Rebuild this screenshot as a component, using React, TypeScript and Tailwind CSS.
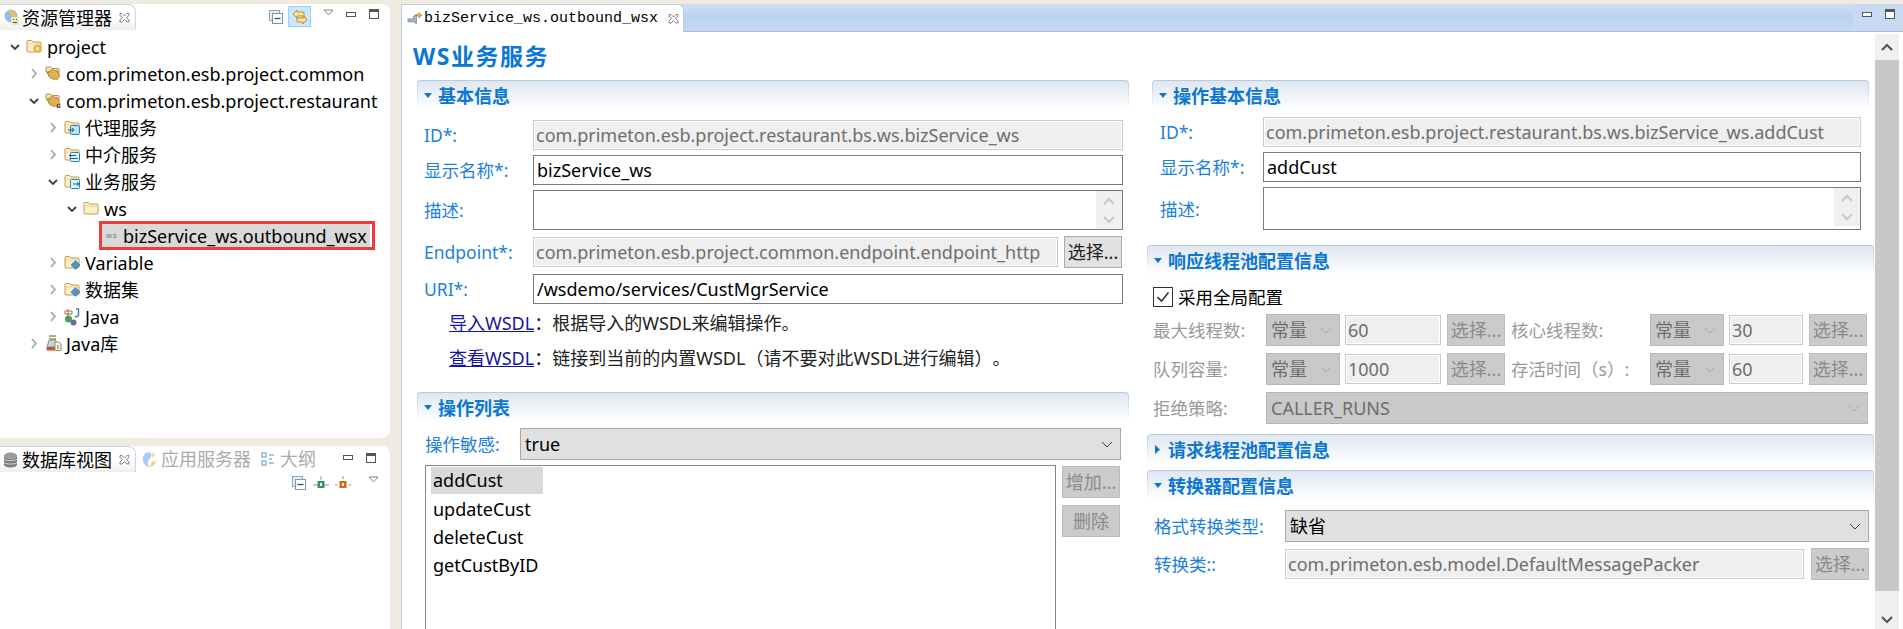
import React from "react";

const font = "font-['Noto_Sans','Noto_Sans_CJK_SC',sans-serif]";

function Chevron({ open, className = "" }: { open: boolean; className?: string }) {
  return open ? (
    <svg width="10" height="8" viewBox="0 0 10 8" className={className}><path d="M1 2l4 4 4-4" fill="none" stroke="#404040" strokeWidth="1.8" /></svg>
  ) : (
    <svg width="8" height="11" viewBox="0 0 8 11" className={className}><path d="M2 1l4 4.5L2 10" fill="none" stroke="#a8a8a8" strokeWidth="1.8" /></svg>
  );
}

function Folder({ badge }: { badge?: "gear" | "box1" | "box2" | "box3" | "diamond" }) {
  return (
    <svg width="17" height="17" viewBox="0 0 17 17">
      <path d="M1 3.500a1 1 0 011-1h3.500l1.500 1.500h7a1 1 0 011 1v8a1 1 0 01-1 1H2a1 1 0 01-1-1z" fill="#fbeecb" stroke="#c39a55" />
      <path d="M2 6h12.500" stroke="#f3d58f" />
      {badge === "gear" && <><circle cx="11.500" cy="10.500" r="4" fill="#e6b54a" /><circle cx="11.500" cy="10.500" r="1.500" fill="#fff2c0" /></>}
      {badge === "box1" && <><rect x="6.500" y="6.500" width="9" height="9" rx="1" fill="#bfe3f5" stroke="#1a87b8" /><path d="M4 11h6m-2-2l2 2-2 2" fill="none" stroke="#10618a" /></>}
      {badge === "box2" && <><rect x="6.500" y="6.500" width="9" height="9" rx="1" fill="#e5f4fb" stroke="#1a87b8" /><path d="M5 9.500h7m-5 3h7" stroke="#10618a" /></>}
      {badge === "box3" && <><rect x="6.500" y="6.500" width="9" height="9" rx="1" fill="#e5f4fb" stroke="#1a87b8" /><path d="M9 11h6m-2-2l2 2-2 2" fill="none" stroke="#10618a" /></>}
      {badge === "diamond" && <path d="M11.500 6.500l4.500 4.500-4.500 4.500L7 11z" fill="#4f94cf" stroke="#2e6fa8" strokeWidth=".6" />}
    </svg>
  );
}

function Pkg({ marked }: { marked?: boolean }) {
  return (
    <svg width="17" height="17" viewBox="0 0 17 17">
      <path d="M1 3a1 1 0 011-1h3.500L7 3.500h6a1 1 0 011 1V7H1z" fill="#f6e2ae" stroke="#b98f4a" />
      <path d="M8.500 4.500l1.500 1.500 2-.5.500 2 2 .5-.5 2 1 1.500-2 1-.5 2-2-.5L8.500 15l-1-2-2 .5-.5-2-2-.5.500-2-2-1 3-1 1-2z" fill="#e3b04e" stroke="#8f6520" strokeWidth=".6" />
      {marked && <text x="11.500" y="15.500" fontSize="6" fontFamily="Liberation Sans" fontWeight="700" fill="#333">B</text>}
    </svg>
  );
}

function JavaIcon() {
  return (
    <svg width="17" height="18" viewBox="0 0 17 18">
      <path d="M4 1v7M1 3h7v3H1z" fill="none" stroke="#9c6b4a" />
      <path d="M12 1h2.500v6a2 2 0 01-3.500 1" fill="none" stroke="#4a7fa8" strokeWidth="1.500" />
      <circle cx="4.500" cy="11" r="3.500" fill="#4f9e5c" />
      <circle cx="9.500" cy="14.500" r="3" fill="#7464a8" />
    </svg>
  );
}

function LibIcon() {
  return (
    <svg width="16" height="17" viewBox="0 0 16 17">
      <path d="M3 1h7M3 4h7" stroke="#b08a3c" strokeWidth="1.500" />
      <path d="M3 5L1 12h8l1-7z" fill="#bcd8d8" stroke="#7d9a9a" />
      <rect x="0.500" y="12" width="10" height="3.500" fill="#c9572f" />
      <path d="M9 7h4l2 2v6.500H9z" fill="#f8f2dc" stroke="#9c9064" />
      <path d="M11 11h2m-2 2h2" stroke="#4f7fb0" />
    </svg>
  );
}

function CloseX() {
  return (
    <svg width="11" height="11" viewBox="0 0 11 11">
      <path d="M1 1.500h2l2.500 2.500L8 1.500h2v2L7.500 5.500 10 8v2H8L5.500 7.500 3 10H1V8l2.500-2.500L1 3.500z" fill="#fff" stroke="#777" strokeWidth=".9" />
    </svg>
  );
}

function MinMax() {
  return (
    <div className="flex items-center gap-[13px]">
      <div className="w-[10px] h-[5px] border border-[#555] bg-white" />
      <div className="w-[10px] h-[10px] border border-[#555] border-t-[3px] bg-white" />
    </div>
  );
}

function MenuTri() {
  return (
    <svg width="11" height="7" viewBox="0 0 11 7"><path d="M1 1h9L5.500 6z" fill="#fff" stroke="#666" strokeWidth=".8" /></svg>
  );
}

function CollapseIcon() {
  return (
    <svg width="14" height="14" viewBox="0 0 14 14">
      <rect x=".5" y=".5" width="10" height="10" fill="#e4ecf3" stroke="#8fa8bf" />
      <rect x="3.500" y="3.500" width="10" height="10" fill="#fff" stroke="#7e93aa" />
      <path d="M5.500 8.500h6" stroke="#13588f" strokeWidth="1.300" />
    </svg>
  );
}

const treeIndent: Record<number, string> = {
  0: "pl-[9px]",
  1: "pl-[28px]",
  2: "pl-[47px]",
  3: "pl-[66px]",
};

function TreeRow({ depth, open, icon, children }: { depth: number; open: boolean; icon: React.ReactNode; children: React.ReactNode }) {
  return (
    <div className={`flex items-center h-[27px] ${treeIndent[depth]}`}>
      <div className="w-[11px] flex justify-center"><Chevron open={open} /></div>
      <div className="w-[17px] ml-[6px] flex justify-center">{icon}</div>
      <span className="ml-[4px] whitespace-nowrap">{children}</span>
    </div>
  );
}

function Section({ title, open = true, className = "", children }: { title: string; open?: boolean; className?: string; children?: React.ReactNode }) {
  return (
    <div className={className}>
      <div className="h-[30px] p-[1px] pb-0 rounded-t-[4px] bg-gradient-to-b from-[#b4cbe2] to-white">
        <div className="h-full rounded-t-[3px] bg-gradient-to-b from-[#dfe7f1] to-white flex items-center pl-[6px] text-[18px] font-bold text-[#0b77d3]">
          {open ? (
            <svg width="8" height="5" viewBox="0 0 8 5" className="mr-[6px]"><path d="M0 0h8L4 5z" fill="#0b77d3" /></svg>
          ) : (
            <svg width="5" height="9" viewBox="0 0 5 9" className="mr-[8px] ml-[1px]"><path d="M0 0l5 4.500L0 9z" fill="#0b77d3" /></svg>
          )}
          <span className="whitespace-nowrap">{title}</span>
        </div>
      </div>
      {children}
    </div>
  );
}

function Label({ className = "", children }: { className?: string; children: React.ReactNode }) {
  return <div className={`text-[17.500px] text-[#1d80dc] whitespace-nowrap ${className}`}>{children}</div>;
}

function Input({ value, disabled, className = "" }: { value?: string; disabled?: boolean; className?: string }) {
  return (
    <div className={`h-[30px] flex items-center whitespace-nowrap overflow-hidden ${disabled ? "pl-[2px] border border-[#c9c9c9] shadow-[inset_0_0_0_1px_#fff] bg-[#efefef] text-[#6e6e6e]" : "pl-[3px] border border-[#7a7a7a] bg-white text-black"} ${className}`}>
      {value}
    </div>
  );
}

function Arrow({ up, dark }: { up?: boolean; dark?: boolean }) {
  return (
    <svg width="12" height="8" viewBox="0 0 12 8">
      <path d={up ? "M1 7l5-5 5 5" : "M1 1l5 5 5-5"} fill="none" stroke={dark ? "#505050" : "#c8c8c8"} strokeWidth="2" />
    </svg>
  );
}

function DescBox({ className = "" }: { className?: string }) {
  return (
    <div className={`border border-[#7a7a7a] bg-white flex justify-end ${className}`}>
      <div className="w-[26px] flex flex-col">
        <div className="h-[19px] bg-[#f0f0f0] flex items-center justify-center"><Arrow up /></div>
        <div className="h-[19px] bg-[#f0f0f0] flex items-center justify-center"><Arrow /></div>
      </div>
    </div>
  );
}

function Btn({ label, disabled, className = "" }: { label: string; disabled?: boolean; className?: string }) {
  return (
    <div className={`w-[58px] h-[32px] shrink-0 flex items-center justify-center whitespace-nowrap border ${disabled ? "bg-[#cbcbcb] border-[#bcbcbc] text-[#8a8a8a]" : "bg-[#e1e1e1] border-[#adadad] text-[#222]"} ${className}`}>
      {label}
    </div>
  );
}

function Select({ value, disabled, className = "" }: { value: string; disabled?: boolean; className?: string }) {
  return (
    <div className={`h-[32px] flex items-center justify-between px-[4px] border ${disabled ? "bg-[#c9c9c9] border-[#b6b6b6] text-[#6e6e6e]" : "bg-[#e0e0e0] border-[#a8a8a8] text-black"} ${className}`}>
      <span className="whitespace-nowrap">{value}</span>
      <svg width="12" height="7" viewBox="0 0 12 7" className="mr-[3px]"><path d="M1 1l5 5 5-5" fill="none" stroke={disabled ? "#a8a8a8" : "#444"} strokeWidth="1" /></svg>
    </div>
  );
}

function PoolRow({ l1, v1, l2, v2, className = "" }: { l1: string; v1: string; l2: string; v2: string; className?: string }) {
  return (
    <div className={`flex items-center h-[32px] ${className}`}>
      <div className="w-[113px] text-[17.500px] text-[#9a9a9a] whitespace-nowrap">{l1}</div>
      <Select value="常量" disabled className="w-[74px]" />
      <Input value={v1} disabled className="w-[96px] ml-[5px]" />
      <Btn label="选择..." disabled className="ml-[6px]" />
      <div className="w-[139px] ml-[6px] text-[17.500px] text-[#9a9a9a] whitespace-nowrap">{l2}</div>
      <Select value="常量" disabled className="w-[74px]" />
      <Input value={v2} disabled className="w-[74px] ml-[5px]" />
      <Btn label="选择..." disabled className="ml-[6px]" />
    </div>
  );
}

export default function App() {
  return (
    <div className={`w-[1903px] h-[629px] overflow-hidden bg-[#efebe0] flex text-[18px] leading-[24px] text-black [text-spacing-trim:space-all] ${font}`}>
      {/* left column */}
      <div className="w-[390px] shrink-0 flex flex-col pt-[4px]">
        <div className="h-[434px] shrink-0 bg-white rounded-tr-[8px] rounded-br-[8px] flex flex-col">
          <div className="h-[26px] shrink-0 flex items-start">
            <div className="w-[136px] h-[26px] shrink-0 rounded-tr-[8px] border-t border-r border-[#ccd5e5] bg-gradient-to-b from-white via-white to-[#eeeeee] flex items-center pl-[3px]">
              <svg width="17" height="17" viewBox="0 0 17 17">
                <circle cx="8" cy="7" r="6.500" fill="#8fc2ea" />
                <path d="M6 1a6.500 6.500 0 017 7L8 7z" fill="#f2c04a" />
                <rect x="8" y="8" width="8" height="8" fill="#f4e6b8" />
                <path d="M10 10h1v1h-1zm3 0h1v1h-1zm-3 3h4v1h-4z" fill="#1d5a8c" />
              </svg>
              <span className="ml-[2px] whitespace-nowrap">资源管理器</span>
              <span className="ml-[7px]"><CloseX /></span>
            </div>
            <div className="flex items-center ml-[133px] pt-[2px]">
              <CollapseIcon />
              <div className="ml-[5px] w-[23px] h-[21px] bg-[#cce8ff] border border-[#99d1ff] flex items-center justify-center">
                <svg width="16" height="16" viewBox="0 0 16 16"><path d="M1 5l4-4v2h7v4H5v2zM15 11l-4 4v-2H5V9h7V7z" fill="#f7e6a0" stroke="#b8860b" strokeWidth=".9" /></svg>
              </div>
              <div className="ml-[12px] -mt-[8px]"><MenuTri /></div>
              <div className="ml-[12px] -mt-[5px]"><MinMax /></div>
            </div>
          </div>
          <div className="mt-[3px]">
            <TreeRow depth={0} open icon={<Folder badge="gear" />}>project</TreeRow>
            <TreeRow depth={1} open={false} icon={<Pkg />}>com.primeton.esb.project.common</TreeRow>
            <TreeRow depth={1} open icon={<Pkg marked />}>com.primeton.esb.project.restaurant</TreeRow>
            <TreeRow depth={2} open={false} icon={<Folder badge="box1" />}>代理服务</TreeRow>
            <TreeRow depth={2} open={false} icon={<Folder badge="box2" />}>中介服务</TreeRow>
            <TreeRow depth={2} open icon={<Folder badge="box3" />}>业务服务</TreeRow>
            <TreeRow depth={3} open icon={<Folder />}>ws</TreeRow>
            <div className="flex items-center h-[27px] pl-[99px]">
              <div className="h-[29px] w-[276px] border-[3px] border-[#f23a3a] bg-white flex items-stretch">
                <div className="flex-1 bg-[#d9d9d9] flex items-center pl-[4px] mr-[2px]">
                  <span className="text-[8px] text-[#5a7f9c] w-[16px] tracking-[1px] leading-none font-['Liberation_Sans',sans-serif]">ws</span>
                  <span className="ml-[1px] whitespace-nowrap">bizService_ws.outbound_wsx</span>
                </div>
              </div>
            </div>
            <TreeRow depth={2} open={false} icon={<Folder badge="diamond" />}>Variable</TreeRow>
            <TreeRow depth={2} open={false} icon={<Folder badge="diamond" />}>数据集</TreeRow>
            <TreeRow depth={2} open={false} icon={<JavaIcon />}>Java</TreeRow>
            <TreeRow depth={1} open={false} icon={<LibIcon />}>Java库</TreeRow>
          </div>
        </div>
        <div className="mt-[8px] flex-1 bg-white rounded-tr-[8px]">
          <div className="h-[26px] flex items-start">
            <div className="w-[136px] h-[26px] shrink-0 rounded-tr-[8px] border-t border-r border-[#ccd5e5] bg-gradient-to-b from-white via-white to-[#eeeeee] flex items-center pl-[3px]">
              <svg width="15" height="16" viewBox="0 0 15 16">
                <ellipse cx="7.500" cy="3.500" rx="6.500" ry="3" fill="#9a9a9a" />
                <path d="M1 3.500v9c0 1.700 3 3 6.500 3s6.500-1.300 6.500-3v-9c0 1.700-3 3-6.500 3S1 5.200 1 3.500z" fill="#7f7f7f" />
                <path d="M1 7c1 2 12 2 13 0M1 10.500c1 2 12 2 13 0" fill="none" stroke="#d5d5d5" />
              </svg>
              <span className="ml-[4px] whitespace-nowrap">数据库视图</span>
              <span className="ml-[7px]"><CloseX /></span>
            </div>
            <div className="flex items-center h-[26px] text-[#ababab]">
              <svg width="16" height="17" viewBox="0 0 16 17" className="ml-[5px]">
                <path d="M9 1C3 1 1 6 2 10c1 4 4 6 7 6-3-2-3-5-1-7s3-5 1-8z" fill="#a9cdee" />
                <path d="M9 16c4-1 6-4 6-7-1 2-3 2-4 1" fill="#f2cf7a" />
                <path d="M12 1l1 2 2 1-2 1-1 2-1-2-2-1 2-1z" fill="#f5d98c" />
              </svg>
              <span className="ml-[4px] whitespace-nowrap">应用服务器</span>
              <svg width="14" height="15" viewBox="0 0 14 15" className="ml-[10px]">
                <path d="M1 1h4v4H1zM1 9h4v4H1z" fill="none" stroke="#8db6d8" strokeWidth="1.500" />
                <path d="M8 3h5M8 7h3M8 11h5" stroke="#8db6d8" strokeWidth="1.500" />
              </svg>
              <span className="ml-[5px] whitespace-nowrap">大纲</span>
              <div className="ml-[27px] -mt-[3px]"><MinMax /></div>
            </div>
          </div>
          <div className="flex items-center pl-[292px] mt-[4px]">
            <CollapseIcon />
            <svg width="16" height="14" viewBox="0 0 16 14" className="ml-[7px]"><path d="M8 0v4M0 9h16" stroke="#b8b8b8" strokeWidth="1.500" /><rect x="4.500" y="5" width="7" height="7" fill="#2d9a5c" /><rect x="7" y="7" width="2" height="3" fill="#fff" /></svg>
            <svg width="16" height="14" viewBox="0 0 16 14" className="ml-[6px]"><path d="M8 0v3M0 9h2M14 9h2" stroke="#b8b8b8" strokeWidth="1.500" /><rect x="4.500" y="5" width="7" height="7" fill="#cf6a1c" /><rect x="7" y="7" width="2" height="3" fill="#fff" /></svg>
            <div className="ml-[17px] -mt-[7px]"><MenuTri /></div>
          </div>
        </div>
      </div>

      {/* editor */}
      <div className="w-[1502px] shrink-0 ml-[11px] mt-[4px] flex flex-col border-l border-[#b8cde8] bg-white">
        <div className="h-[28px] shrink-0 flex border-b border-[#a9bcd8] bg-gradient-to-b from-[#cfdff4] via-[#b9d2f0] to-[#c9d8f1]">
          <div className="w-[282px] h-[28px] bg-white rounded-tr-[6px] border-t border-r border-[#b8cde8] flex items-center pl-[5px] font-['Liberation_Mono',monospace] text-[15px]">
            <svg width="17" height="16" viewBox="0 0 18 16">
              <path d="M1 8h6V5l3-2v10l-3-2H1z" fill="#a9b6c4" stroke="#5f6f80" strokeWidth=".7" />
              <path d="M13 1l1 2 2 1-2 1-1 2-1-2-2-1 2-1z" fill="#e4b83a" stroke="#8a6a12" strokeWidth=".5" />
            </svg>
            <span className="whitespace-nowrap">bizService_ws.outbound_wsx</span>
            <span className="ml-[10px]"><CloseX /></span>
          </div>
          <div className="ml-auto w-[50px] flex items-center justify-center pb-[7px] bg-[#c8d9f2]"><MinMax /></div>
        </div>
        <div className="flex-1 flex min-h-0 overflow-hidden">
          <div className="w-[1473px] shrink-0 flex flex-col">
            <div className="h-[48px] shrink-0 pl-[11px] flex items-center text-[23px] font-bold text-[#0b77d3] tracking-[1.500px]">WS业务服务</div>
            <div className="flex shrink-0">
              {/* left form */}
              <div className="w-[746px] shrink-0 pl-[15px]">
                <Section title="基本信息" className="w-[712px]" />
                <div className="pl-[7px] pt-[10px]">
                  <div className="flex items-center"><Label className="w-[109px]">ID*:</Label><Input disabled value="com.primeton.esb.project.restaurant.bs.ws.bizService_ws" className="w-[590px]" /></div>
                  <div className="flex items-center mt-[5px]"><Label className="w-[109px]">显示名称*:</Label><Input value="bizService_ws" className="w-[590px]" /></div>
                  <div className="flex items-center mt-[5px]"><Label className="w-[109px]">描述:</Label><DescBox className="w-[590px] h-[40px]" /></div>
                  <div className="flex items-center mt-[6px]"><Label className="w-[109px]">Endpoint*:</Label><Input disabled value="com.primeton.esb.project.common.endpoint.endpoint_http" className="w-[525px] h-[29px]" /><Btn label="选择..." className="ml-[6px]" /></div>
                  <div className="flex items-center mt-[6px]"><Label className="w-[109px]">URI*:</Label><Input value="/wsdemo/services/CustMgrService" className="w-[590px] h-[29px]" /></div>
                  <div className="pl-[25px] mt-[5px] h-[28px] flex items-center whitespace-nowrap"><span className="text-[#15159c] underline">导入WSDL</span><span className="text-[#222]">：根据导入的WSDL来编辑操作。</span></div>
                  <div className="pl-[25px] mt-[7px] h-[28px] flex items-center whitespace-nowrap"><span className="text-[#15159c] underline">查看WSDL</span><span className="text-[#222]">：链接到当前的内置WSDL（请不要对此WSDL进行编辑）。</span></div>
                </div>
                <Section title="操作列表" className="w-[712px] mt-[20px]" />
                <div className="pl-[8px] pt-[6px]">
                  <div className="flex items-center"><Label className="w-[95px]">操作敏感:</Label><Select value="true" className="w-[601px]" /></div>
                  <div className="flex mt-[5px]">
                    <div className="w-[631px] h-[170px] border border-[#85858f] border-b-0 pl-[5px] pt-[1px]">
                      <div className="h-[28px] leading-[27px] pl-[2px] w-[112px]"><div className="h-[27px] -ml-[2px] pl-[2px] bg-[#d9d9d9]">addCust</div></div>
                      <div className="h-[28px] pl-[2px] leading-[28px]">updateCust</div>
                      <div className="h-[28px] pl-[2px] leading-[28px]">deleteCust</div>
                      <div className="h-[28px] pl-[2px] leading-[28px]">getCustByID</div>
                    </div>
                    <div className="ml-[6px] flex flex-col gap-[7px] pt-[1px]">
                      <Btn label="增加..." disabled />
                      <Btn label="删除" disabled />
                    </div>
                  </div>
                </div>
              </div>
              {/* right form */}
              <div className="flex-1 min-w-0">
                <Section title="操作基本信息" className="w-[717px] ml-[4px]" />
                <div className="pl-[12px] pt-[7px]">
                  <div className="flex items-center"><Label className="w-[103px]">ID*:</Label><Input disabled value="com.primeton.esb.project.restaurant.bs.ws.bizService_ws.addCust" className="w-[598px]" /></div>
                  <div className="flex items-center mt-[5px]"><Label className="w-[103px]">显示名称*:</Label><Input value="addCust" className="w-[598px]" /></div>
                  <div className="flex items-center mt-[5px]"><Label className="w-[103px]">描述:</Label><DescBox className="w-[598px] h-[43px]" /></div>
                </div>
                <Section title="响应线程池配置信息" className="w-[727px] -ml-[1px] mt-[15px]">
                  <div className="pl-[6px]">
                    <div className="flex items-center h-[20px] mt-[12px]">
                      <div className="w-[20px] h-[20px] border border-[#333] bg-white flex items-center justify-center">
                        <svg width="14" height="12" viewBox="0 0 14 12"><path d="M1.500 6l4 4 7-8.500" fill="none" stroke="#333" strokeWidth="1.600" /></svg>
                      </div>
                      <span className="ml-[5px] text-[17.500px]">采用全局配置</span>
                    </div>
                    <PoolRow className="mt-[7px]" l1="最大线程数:" v1="60" l2="核心线程数:" v2="30" />
                    <PoolRow className="mt-[7px]" l1="队列容量:" v1="1000" l2="存活时间（s）:" v2="60" />
                    <div className="flex items-center h-[32px] mt-[7px]">
                      <div className="w-[113px] text-[17.500px] text-[#9a9a9a]">拒绝策略:</div>
                      <Select value="CALLER_RUNS" disabled className="w-[602px]" />
                    </div>
                  </div>
                </Section>
                <Section title="请求线程池配置信息" open={false} className="w-[727px] -ml-[1px] mt-[10px]" />
                <div className="h-[6px]" />
                <Section title="转换器配置信息" className="w-[727px] -ml-[1px]">
                  <div className="pl-[7px]">
                    <div className="flex items-center mt-[10px]"><Label className="w-[131px]">格式转换类型:</Label><Select value="缺省" className="w-[584px]" /></div>
                    <div className="flex items-center mt-[6px]"><Label className="w-[131px]">转换类::</Label><Input disabled value="com.primeton.esb.model.DefaultMessagePacker" className="w-[519px]" /><Btn label="选择..." disabled className="ml-[7px]" /></div>
                  </div>
                </Section>
              </div>
            </div>
          </div>
          {/* scrollbar */}
          <div className="w-[24px] shrink-0 mt-[2px] flex flex-col">
            <div className="h-[26px] shrink-0 bg-[#f0f0f0] flex items-center justify-center"><Arrow up dark /></div>
            <div className="h-[531px] shrink-0 bg-[#c8c8c8]" />
            <div className="flex-1 bg-[#f0f0f0] flex items-center justify-center pt-[20px]"><Arrow dark /></div>
          </div>
        </div>
      </div>
    </div>
  );
}
